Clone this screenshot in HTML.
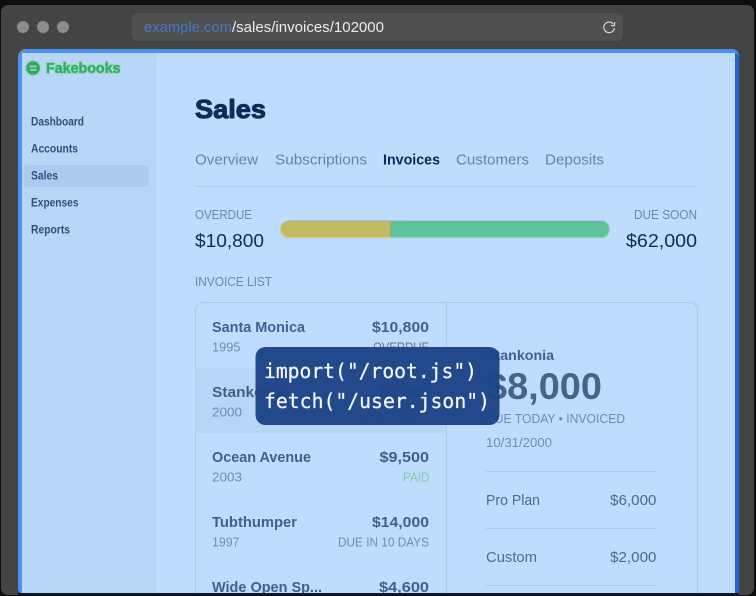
<!DOCTYPE html>
<html><head><meta charset="utf-8"><style>
html,body{margin:0;padding:0;background:#0d0d0d;width:756px;height:596px;overflow:hidden}
svg{display:block;font-family:"Liberation Sans",sans-serif}
.b{font-weight:700}
.nav{font-size:11.5px;font-weight:700;fill:#2f4f80}
.tab{font-size:14.6px;fill:#6584ab}
.lab{font-size:12.5px;fill:#6b88ad}
.amt{font-size:18.8px;fill:#0e2c58}
.nm{font-size:14.6px;font-weight:700;fill:#3f618e}
.sub{font-size:12.5px;fill:#6f8cb1}
.it{font-size:14.6px;fill:#4c6b94}
.mono{font-family:"DejaVu Sans Mono","Liberation Mono",monospace;font-size:20px;fill:#f3f6fb;stroke:#f3f6fb;stroke-width:.25}
</style></head><body>
<svg width="756" height="596" viewBox="0 0 756 596" xmlns="http://www.w3.org/2000/svg">
<defs><filter id="g" x="-20%" y="-40%" width="140%" height="180%"><feGaussianBlur stdDeviation="0.9"/></filter></defs>
<rect width="756" height="596" fill="#0d0d0d"/>
<rect x="1" y="5" width="753" height="590" rx="7" fill="#444444"/>
<circle cx="23" cy="27" r="6" fill="#8c8c8c"/><circle cx="43" cy="27" r="6" fill="#8c8c8c"/><circle cx="63" cy="27" r="6" fill="#8c8c8c"/>
<rect x="132" y="13" width="491" height="28" rx="6" fill="#505050"/>
<text x="144" y="32" font-size="15" fill="#4279c8" textLength="88" lengthAdjust="spacingAndGlyphs">example.com</text>
<text x="232" y="32" font-size="15" fill="#ececec" textLength="152" lengthAdjust="spacingAndGlyphs">/sales/invoices/102000</text>
<g fill="none" stroke="#e0e0e0" stroke-width="1.1"><path d="M613.4 24.200A5.300 5.300 0 1 0 614.400 28"/><path d="M610.800 25.600l3.800 0.200 0.100-3.800" stroke-width="1"/></g>

<!-- page frame -->
<rect x="18" y="49" width="721" height="546" rx="7" fill="#4a92f2"/>
<path d="M735 53h1l3 3v539h-4z" fill="#1c68d2"/>
<path d="M18 58a9 9 0 0 1 7-9h-7z" fill="#444"/>
<path d="M18.500 57a8 8 0 0 1 6.500-7.500" stroke="#8a8f96" fill="none"/>
<rect x="22" y="53" width="713" height="541" fill="#bfdcff"/>
<rect x="22" y="53" width="133" height="541" fill="#b8d6f8"/>
<rect x="155" y="53" width="1" height="541" fill="#b4d2f4"/>

<!-- logo -->
<circle cx="33" cy="68" r="7.800" fill="#7fe0a0" filter="url(#g)"/>
<circle cx="33" cy="68" r="6.800" fill="#37a36e"/>
<path d="M29.500 65.500h7v2h-7zM30.500 69h6v2h-6z" fill="#a8dcbc" opacity=".8"/>
<text x="46" y="73" font-size="14.500" class="b" fill="#86e2a6" stroke="#86e2a6" stroke-width="1.800" filter="url(#g)" textLength="74.500" lengthAdjust="spacingAndGlyphs">Fakebooks</text>
<text x="46" y="73" font-size="14.500" class="b" fill="#3ca574" stroke="#3ca574" stroke-width=".3" textLength="74.500" lengthAdjust="spacingAndGlyphs">Fakebooks</text>

<!-- nav -->
<rect x="23.500" y="165" width="125" height="22" rx="4" fill="#aecbee"/>
<text x="31" y="125.700" class="nav" textLength="53" lengthAdjust="spacingAndGlyphs">Dashboard</text>
<text x="31" y="152.700" class="nav" textLength="47" lengthAdjust="spacingAndGlyphs">Accounts</text>
<text x="31" y="179.700" class="nav" textLength="27" lengthAdjust="spacingAndGlyphs">Sales</text>
<text x="31" y="206.700" class="nav" textLength="47.500" lengthAdjust="spacingAndGlyphs">Expenses</text>
<text x="31" y="233.700" class="nav" textLength="39" lengthAdjust="spacingAndGlyphs">Reports</text>

<!-- header -->
<text x="195" y="118" font-size="26" class="b" fill="#0d2c57" stroke="#0d2c57" stroke-width="1" textLength="71" lengthAdjust="spacingAndGlyphs">Sales</text>
<text x="195" y="164.500" class="tab" textLength="63" lengthAdjust="spacingAndGlyphs">Overview</text>
<text x="275" y="164.500" class="tab" textLength="92" lengthAdjust="spacingAndGlyphs">Subscriptions</text>
<text x="383" y="164.500" font-size="14.600" class="b" fill="#0c2a58" textLength="57" lengthAdjust="spacingAndGlyphs">Invoices</text>
<text x="456" y="164.500" class="tab" textLength="73" lengthAdjust="spacingAndGlyphs">Customers</text>
<text x="545" y="164.500" class="tab" textLength="59" lengthAdjust="spacingAndGlyphs">Deposits</text>
<rect x="195" y="186" width="503" height="1" fill="#aaccee"/>

<!-- summary -->
<text x="195" y="219" class="lab" textLength="57" lengthAdjust="spacingAndGlyphs">OVERDUE</text>
<text x="195" y="247" class="amt" textLength="69" lengthAdjust="spacingAndGlyphs">$10,800</text>
<text x="634" y="219" class="lab" textLength="63" lengthAdjust="spacingAndGlyphs">DUE SOON</text>
<text x="626" y="247" class="amt" textLength="71" lengthAdjust="spacingAndGlyphs">$62,000</text>
<rect x="280" y="220.500" width="330" height="18" rx="8.500" fill="#a8c6e6"/>
<path d="M390 221h211a8 8 0 0 1 0 17h-211z" fill="#8cdcb0"/>
<path d="M289 221h102v17h-102a8.500 8.500 0 0 1 0-17z" fill="#dcd87a"/>
<path d="M289 221h102v16h-102a8 8 0 0 1 0-16z" fill="#c3bb5f"/>
<path d="M391 221h210a8 8 0 0 1 0 16h-210z" fill="#5dc39a"/>
<rect x="289" y="220.500" width="312" height="1" fill="#94a8c0" opacity=".7"/>
<rect x="390" y="221" width="1" height="16" fill="#a9aa58"/>

<text x="195" y="286" class="lab" textLength="77" lengthAdjust="spacingAndGlyphs">INVOICE LIST</text>

<!-- card -->
<rect x="195.500" y="302.500" width="502" height="300" rx="8" fill="#bfdcff" stroke="#aacbee"/>
<rect x="196" y="368" width="250" height="65" fill="#b8d6f8"/>
<rect x="446" y="303" width="1" height="291" fill="#aacbee"/>

<text x="212" y="332" class="nm" textLength="93" lengthAdjust="spacingAndGlyphs">Santa Monica</text>
<text x="212" y="351.500" class="sub" textLength="28.500" lengthAdjust="spacingAndGlyphs">1995</text>
<text x="372" y="332" class="nm" textLength="57" lengthAdjust="spacingAndGlyphs">$10,800</text>
<text x="373" y="351.500" font-size="12.500" fill="#6f6f80" textLength="56" lengthAdjust="spacingAndGlyphs">OVERDUE</text>

<text x="212" y="397" class="nm" textLength="74" lengthAdjust="spacingAndGlyphs">Stankonia</text>
<text x="212" y="416.500" class="sub" textLength="30" lengthAdjust="spacingAndGlyphs">2000</text>
<text x="379" y="397" class="nm" textLength="50" lengthAdjust="spacingAndGlyphs">$8,000</text>
<text x="362" y="416.500" class="sub" textLength="67" lengthAdjust="spacingAndGlyphs">DUE TODAY</text>

<text x="212" y="462" class="nm" textLength="99" lengthAdjust="spacingAndGlyphs">Ocean Avenue</text>
<text x="212" y="481.500" class="sub" textLength="30" lengthAdjust="spacingAndGlyphs">2003</text>
<text x="379.500" y="462" class="nm" textLength="49.500" lengthAdjust="spacingAndGlyphs">$9,500</text>
<text x="403" y="481.500" font-size="12.500" fill="#7fcda6" textLength="26.500" lengthAdjust="spacingAndGlyphs">PAID</text>

<text x="212" y="527" class="nm" textLength="85" lengthAdjust="spacingAndGlyphs">Tubthumper</text>
<text x="212" y="546.500" class="sub" textLength="27.500" lengthAdjust="spacingAndGlyphs">1997</text>
<text x="372" y="527" class="nm" textLength="57" lengthAdjust="spacingAndGlyphs">$14,000</text>
<text x="338" y="546.500" class="sub" textLength="91" lengthAdjust="spacingAndGlyphs">DUE IN 10 DAYS</text>

<text x="212" y="592" class="nm" textLength="110" lengthAdjust="spacingAndGlyphs">Wide Open Sp...</text>
<text x="379" y="592" class="nm" textLength="50" lengthAdjust="spacingAndGlyphs">$4,600</text>

<!-- detail -->
<text x="486" y="360" font-size="14" class="b" fill="#3f618e" textLength="68" lengthAdjust="spacingAndGlyphs">Stankonia</text>
<text x="486" y="399" font-size="37" class="b" fill="#446489" textLength="116" lengthAdjust="spacingAndGlyphs">$8,000</text>
<text x="486" y="423" class="sub" textLength="139" lengthAdjust="spacingAndGlyphs">DUE TODAY • INVOICED</text>
<text x="486" y="447" class="sub" textLength="66" lengthAdjust="spacingAndGlyphs">10/31/2000</text>
<rect x="486" y="471" width="170" height="1" fill="#aacbee"/>
<text x="486" y="505" class="it" textLength="54" lengthAdjust="spacingAndGlyphs">Pro Plan</text>
<text x="610" y="505" class="it" textLength="46.500" lengthAdjust="spacingAndGlyphs">$6,000</text>
<rect x="486" y="528" width="170" height="1" fill="#aacbee"/>
<text x="486" y="562" class="it" textLength="51" lengthAdjust="spacingAndGlyphs">Custom</text>
<text x="610" y="562" class="it" textLength="46.500" lengthAdjust="spacingAndGlyphs">$2,000</text>
<rect x="486" y="585" width="170" height="1" fill="#aacbee"/>

<!-- tooltip -->
<rect x="255.500" y="347" width="244" height="78" rx="10" fill="#1e4489" opacity=".97"/>
<text x="264" y="378" class="mono" textLength="213" lengthAdjust="spacingAndGlyphs">import("/root.js")</text>
<text x="264" y="408" class="mono" textLength="226" lengthAdjust="spacingAndGlyphs">fetch("/user.json")</text>

<!-- bottom edge -->
<rect x="18" y="593" width="721" height="3" fill="#0c1a30"/>
<rect x="0" y="595" width="756" height="1" fill="#0d0d0d"/>
</svg>
</body></html>
